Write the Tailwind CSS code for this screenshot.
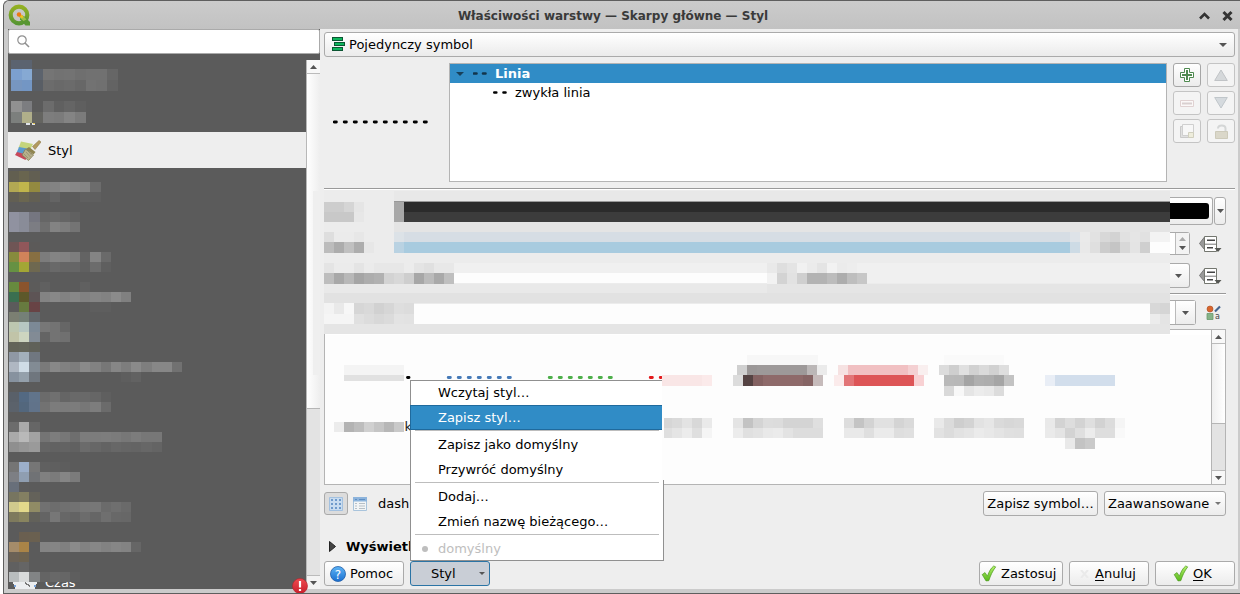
<!DOCTYPE html>
<html lang="pl">
<head>
<meta charset="utf-8">
<title>Właściwości warstwy — Skarpy główne — Styl</title>
<script src="https://cdn.jsdelivr.net/npm/@tailwindcss/browser@4"></script>
</head>
<body class="w-[1240px] h-[594px] overflow-hidden bg-white font-['DejaVu_Sans',sans-serif] text-[13px] leading-4 text-black">
<svg width="0" height="0" class="absolute">
  <defs>
    <linearGradient id="gc" x1="0" y1="0" x2="0" y2="1"><stop offset="0" stop-color="#b5f26b"/><stop offset="1" stop-color="#58b81c"/></linearGradient>
    <linearGradient id="gb" x1="0" y1="0" x2="0" y2="1"><stop offset="0" stop-color="#5db4f5"/><stop offset="1" stop-color="#1a6fd0"/></linearGradient>
    <linearGradient id="gq" x1="0" y1="0" x2="0" y2="1"><stop offset="0" stop-color="#93b023"/><stop offset="1" stop-color="#589632"/></linearGradient>
    <linearGradient id="gr" x1="0" y1="0" x2="0" y2="1"><stop offset="0" stop-color="#ee4a4f"/><stop offset="1" stop-color="#c91f2c"/></linearGradient>
    <symbol id="check" viewBox="0 0 16 17"><path d="M1.2 9.6 4 7.6l2.4 3.6C8 6.600 10 3 12.700 1l2 .9C11.500 6 9.500 10.500 7.800 15.700L5 15.900Z" fill="url(#gc)" stroke="#4e9a20" stroke-width=".7" stroke-linejoin="round"/></symbol>
    <symbol id="override" viewBox="0 0 24 18"><path d="M5.500 2v12.500L.5 8.500Z" fill="#999" stroke="#777"/><path d="M5.500 1.500h12v15h-12z" fill="#fff" stroke="#73766f"/><path d="M6 9.200h11" stroke="#777"/><path d="M8 5.200h8M8 12.800h6" stroke="#444" stroke-width="1.600"/><path d="M15.500 13h7L19 17z" fill="#555753"/></symbol>
  </defs>
</svg>
<div class="relative ml-[3px] flex h-[594px] w-[1237px] flex-col rounded-tl-md border-t border-l border-b border-[#5e5e5e] bg-[#cbcbcb]">
  <header class="flex h-[28px] shrink-0 items-center rounded-tl-md bg-linear-to-b from-[#cbcbcb] to-[#c2c2c2]">
    <svg class="ml-[4px] h-[22px] w-[22px]" viewBox="0 0 22 22"><circle cx="11" cy="11" r="8.300" fill="none" stroke="url(#gq)" stroke-width="4.200"/><path d="M12 12h4l6 6v3.500h-4.500L12 15.500z" fill="#589632"/><path d="M11 11h3.500l4 4.500-3 1.500-4.500-4z" fill="#9cc04a"/><path d="M11.500 11h2.500l1.500 2-1.500 1.500-2.500-2z" fill="#f0c020"/><circle cx="11" cy="10.500" r="2.200" fill="#ee7913"/></svg>
    <div class="-ml-[26px] flex-1 pt-[2px] pr-[18px] text-center text-[12px] font-bold text-[#3a3a3a]">Właściwości warstwy — Skarpy główne — Styl</div>
    <svg class="-ml-[42px] mr-[6px] mt-[1px] h-[12px] w-[36px]" viewBox="0 0 36 12"><path d="M2 8.500 6.500 4 11 8.500" fill="none" stroke="#333" stroke-width="2.600"/><path d="M25.500 2l8 8M33.500 2l-8 8" stroke="#333" stroke-width="3"/></svg>
  </header>
  <div class="flex h-[560px] shrink-0 pl-[4px]">
    <!-- Sidebar -->
    <aside class="flex w-[312px] shrink-0 flex-col bg-[#5b5b5b]">
      <div class="flex h-[25px] shrink-0 items-center rounded-xs border border-[#aaa] bg-white pl-[8px]">
        <svg class="h-[13px] w-[13px]" viewBox="0 0 13 13"><circle cx="5" cy="5" r="4.200" fill="none" stroke="#909090" stroke-width="1.200"/><path d="M8 8l4 4" stroke="#909090" stroke-width="1.600"/></svg>
      </div>
      <div class="flex flex-1 pt-[6px]">
        <div class="flex w-[298px] flex-col">
          <svg class="h-[72px] w-[298px] shrink-0" viewBox="8 60 298 72" shape-rendering="crispEdges" data-step="10.67" data-strips="11 58 11 5b6370*2|11 69 11 7ca0d0 86a9d3 5c636d 757575 727272 737373 6f6f6f 717171 717171 666|11 80 11 7796c0 7396c4 595e65 6c6c6c 696969 6b6b6b 676767 727272 707070 636363|11 101 11 919191 7c7d80 5b5b5b 6c6c6c 606060 656565 5f5f5f|11 112 11 7c7f7d b0af8a 646460 7d7d7d 7b7b7b 848484 7b7b7b"><path d="M26 123.500h4M32 123.500h3" stroke="#dfe3ea" stroke-width="2"/><path d="M33 123h2" stroke="#e6c64f" stroke-width="1"/></svg>
          <div class="flex h-[36px] shrink-0 items-center bg-[#eeeeee] pl-[7px]">
            <svg class="h-[21px] w-[26px]" viewBox="0 0 26 21"><path d="M6 1.500 18 4l-3 6L3.500 8z" fill="#c5d57c"/><path d="M4 7l11 2-1.500 6L1.500 13z" fill="#5a9bd0"/><path d="M2 12l11 3-2.500 5L0 15z" fill="#c8485a"/><path d="M17.500 6.500 24 .5l2 1.500-6 7.500z" fill="#b39a5e" stroke="#8f7a48" stroke-width=".6"/><path d="M14 7l6.500 5-2 2.500L11 9z" fill="#8f8550"/><path d="M10.500 9l8 6-5 5.500L7 15z" fill="#b7b18c" stroke="#857c52" stroke-width=".8"/><path d="M11 12l4.500 5M9 14l4 4M13.500 11l3 4" stroke="#8b8563" stroke-width=".6"/></svg>
            <span class="ml-[7px] pt-[1px]">Styl</span>
          </div>
          <svg class="h-[421px] w-[298px] shrink-0" viewBox="8 168 298 421" shape-rendering="crispEdges" data-step="10.18" data-strips="9 171 11 625f50 69654f 625f52|9 182 10 b2a853 c0b54c 938a40 818181 838383 8a8a8a 868686 838383 6c6c6c|9 192 10 625f53 6a6650 625f53 5d5d5d 646464 5b5b5b*2 606060 5f5f5f|9 212 10 9092a0 898c98 757680 666 696969 656565 616161|9 222 10 9092a0 898c98 7c7d83 6e6e6e 838383 7d7d7d 747474|9 242 10 6f5555 91575a 5c5a59|9 252 10 878b3d d0835a 876f42 7c7c7c 848484 828282 7d7d7d 636363 848484 6a6a6a|9 262 10 669143 a3a635 6e6850 636363 696969 666 666 606060 6c6c6c 5f5f5f|9 282 10 678a3e 8b542d 5c5b5a 606060 5b5b5b*3 606060|9 292 10 3a6f50 5d582a 5d5455 838383 888 828282 878787 818181 858585 828282 8b8b8b 808080|9 302 10 5b5b5b 677a3f 684345 5b5b5b*5 5e5e5e*2|9 312 10 7b7f72 758077 62676b|9 322 10 bdc7b0 b7c7c2 7c8996 777 737373 666|9 332 10 c1c4a8 cdd5c0 828b95 646464 737373 707070|9 342 10 636459 64665b 606159|9 352 10 8f98a4 a3b0bb 707780|9 362 10 afb7c2 cfdce6 828b94 7a7a7a 888 818181 7d7d7d 8a8a8a 828282 777777 868686 7d7d7d 8a8a8a 7e7e7e 878787 878787 717171|9 372 10 87929f 94a0ab 6f767e 5b5b5b*8 5e5e5e 626262|9 392 10 596069 536982 61748b 6b6b6b 707070 656565 696969 696969 666666 5f5f5f|9 402 10 5b626b 53677d 61738a 727272 7c7c7c 7b7b7b 7c7c7c 777777 7d7d7d 6b6b6b|9 422 10 6c6c6c aaaaaa 666|9 432 10 aaa b9b9b9 a2a2a2 747474 7d7d7d 777777 6e6e6e 7c7c7c*2 7d7d7d 7b7b7b 777777 7c7c7c 777 777777|9 442 10 8f8f8f 959595 9a9a9a 646464 626262 636363 616161 6b6b6b 676767 636363 676767 656565 646464 676767 646464|9 462 10 757575 9cafca 767676 606060 5f5f5f 5d5d5d|9 472 10 7d7f84 8f9eb1 707275 808080 7b7b7b 858585 7b7b7b|9 482 10 686f7a 5c5c5c|9 492 10 777560 837f62 64625a|9 502 10 d1ca8d e3d98b 908b65 717171 6d6d6d 707070 727272 767676 777777 6b6b6b 6f6f6f 6a6a6a|9 512 10 7e7a5d 88845f 62615a 646464 777777 676767 646464 6c6c6c 666666 6f6f6f 686868 676767|9 532 10 5b5b5b 6a5f50 6a6050|9 542 10 a58c6a aa8447 5b5b5b 848484 858585 808080 8b8b8b 828282 878787 828282 868686 838383 666|9 552 10 6b6256 6c6250|9 562 10 606060 656565|9 572 10 b9bdbe d8dada 828485 646464 686868 666666 5e5e5e"><path d="M13 582h24l-2 7H15z" fill="#eceef0"/><path d="M25 583l5 3" stroke="#777" stroke-width="1.500"/><path d="M14 586h2M34 586h2" stroke="#7aa5dc" stroke-width="2"/><text x="45" y="587" font-size="13" fill="#fff">Czas</text></svg>
        </div>
        <div class="relative flex h-[529px] w-[14px] flex-col border-l border-[#b8b8b8] bg-[#e3e3e3]">
          <div class="flex h-[14px] items-center justify-center border-b border-[#bbb] bg-[#f8f8f8]"><svg class="h-[4px] w-[7px]" viewBox="0 0 7 4"><path d="M0 4 3.500 0 7 4z" fill="#555"/></svg></div>
          <div class="h-[335px] border-b border-[#b5b5b5] bg-linear-to-r from-white to-[#eeeeee]"></div>
          <div class="flex-1"></div>
          <div class="flex h-[14px] items-center justify-center border-t border-[#bbb] bg-[#f3f3f3]"><svg class="h-[4px] w-[7px]" viewBox="0 0 7 4"><path d="M0 0h7L3.500 4z" fill="#555"/></svg></div>
          <div class="absolute top-[131px] left-[6px] h-[184px] w-[7px] bg-[#efefef]"></div>
          <svg class="absolute -left-[16px] top-[518px] h-[15px] w-[17px]" viewBox="0 0 17 15"><circle cx="9" cy="8" r="7.500" fill="url(#gr)" stroke="#b3202a" stroke-width=".6"/><path d="M9 3v6.500" stroke="#fff" stroke-width="2.200"/><path d="M9 11v2" stroke="#fff" stroke-width="2.200"/></svg>
        </div>
      </div>
    </aside>
    <!-- Main panel -->
    <main class="flex h-[560px] w-[918px] flex-col bg-[#eeeeee] pl-[4px]">
      <div class="mt-[3px] flex h-[25px] w-[911px] shrink-0 items-center rounded-[3px] border border-[#aaa] bg-linear-to-b from-white to-[#ebebeb] pl-[7px] pr-[7px]">
        <svg class="h-[15px] w-[13px]" viewBox="0 0 13 15" shape-rendering="crispEdges"><path d="M.5.500h10v3H.5zM2.500 5.500h10v3h-10zM.5 10.500h10v3H.5z" fill="#0db55b" stroke="#0b5532"/></svg>
        <span class="ml-[4px] flex-1">Pojedynczy symbol</span>
        <svg class="h-[4px] w-[8px]" viewBox="0 0 8 4"><path d="M0 0h8L4 4z" fill="#555"/></svg>
      </div>
      <div class="mt-[6px] flex h-[119px] shrink-0">
        <div class="flex w-[125px] items-center pb-[1px] pl-[9px]"><svg class="h-[4px] w-[96px]" viewBox="0 0 96 4"><path d="M1.200 2H96" stroke="#000" stroke-width="2.800" stroke-dasharray="2.200 7.800" stroke-linecap="round"/></svg></div>
        <div class="w-[718px] border border-[#b4b4b4] bg-white">
          <div class="flex h-[19px] items-center bg-[#308cc6] pl-[6px] font-bold text-white">
            <svg class="h-[4px] w-[8px]" viewBox="0 0 8 4"><path d="M0 0h8L4 4z" fill="#18405a"/></svg>
            <svg class="ml-[9px] h-[3px] w-[14px]" viewBox="0 0 14 3"><path d="M1 1.500h2.500M10 1.500h2.500" stroke="#12354c" stroke-width="2.600" stroke-linecap="round"/></svg>
            <span class="ml-[8px]">Linia</span>
          </div>
          <div class="flex h-[19px] items-center pl-[43px]">
            <svg class="h-[3px] w-[14px]" viewBox="0 0 14 3"><path d="M1.300 1.500h2M10.500 1.500h2" stroke="#000" stroke-width="2.600" stroke-linecap="round"/></svg>
            <span class="ml-[8px]">zwykła linia</span>
          </div>
        </div>
        <div class="ml-[6px] grid h-[80px] grid-cols-[28px_28px] grid-rows-[24px_24px_24px] gap-x-[6px] gap-y-[4px]">
          <div class="flex items-center justify-center rounded-[3px] border border-[#a6a6a6] bg-linear-to-b from-white to-[#ececec]"><svg class="h-[14px] w-[14px]" viewBox="0 0 14 14"><path d="M4.500.5h5v4h4v5h-4v4h-5v-4h-4v-5h4z" fill="#fff" stroke="#4f8a50"/><path d="M7 2v10M2 7h10" stroke="#4f8a50" stroke-width="2"/></svg></div>
          <div class="flex items-center justify-center rounded-[3px] border border-[#c4c4c4] bg-[#f4f4f4]"><svg class="h-[12px] w-[14px]" viewBox="0 0 14 12"><path d="M7 1l6.300 10.500H.7z" fill="#d5d8da" stroke="#c0c3c6"/></svg></div>
          <div class="flex items-center justify-center rounded-[3px] border border-[#c4c4c4] bg-[#f4f4f4]"><svg class="h-[7px] w-[14px]" viewBox="0 0 14 7"><path d="M.5.500h13v6H.5z" fill="#fbf8f8" stroke="#e0d2d2"/><path d="M2 3.500h10" stroke="#d9d0d0" stroke-width="2"/></svg></div>
          <div class="flex items-center justify-center rounded-[3px] border border-[#c4c4c4] bg-[#f4f4f4]"><svg class="h-[12px] w-[14px]" viewBox="0 0 14 12"><path d="M.7.500h12.600L7 11z" fill="#d5dade" stroke="#c0c6ca"/></svg></div>
          <div class="flex items-center justify-center rounded-[3px] border border-[#c4c4c4] bg-[#f4f4f4]"><svg class="h-[15px] w-[15px]" viewBox="0 0 15 15"><path d="M.5 2.500h10v11H.5z" fill="#e0e0e0" stroke="#c9c9c9"/><path d="M2.500.5h11v11h-11z" fill="#f7f7f7" stroke="#cfcfcf"/><path d="M8.500 8.500h5v5h-5z" fill="#eeeddc" stroke="#d0cfbe"/></svg></div>
          <div class="flex items-center justify-center rounded-[3px] border border-[#c4c4c4] bg-[#f4f4f4]"><svg class="h-[15px] w-[13px]" viewBox="0 0 13 15"><path d="M3 4.500C3 .5 10.500.5 10.500 4.500V8" fill="none" stroke="#d4d6d6" stroke-width="2"/><path d="M.5 7.500h12v7H.5z" fill="#dad7c9" stroke="#cdcaba"/></svg></div>
        </div>
      </div>
      <div class="mt-[6px] h-[2px] w-[911px] shrink-0 border-t border-b border-t-[#999] border-b-white"></div>
      <!-- Symbol properties -->
      <div class="flex h-[139px] shrink-0">
        <svg class="h-[145px] w-[846px] shrink-0" viewBox="324 190 846 145" shape-rendering="crispEdges" data-step="10" data-strips="324 202 10 cdcdcd*2 d5d5d5 e5e5e5|324 212 10 c8c8c8*3 e7e7e7|324 232 10 dedede ebebeb*2 e7e7e7|324 242 11 bcbcbc acacac c0c0c0 adadad e7e7e7|324 263 10 e4e4e4 ebebeb*2 e4e4e4 ebebeb e7e7e7*3 ececec e4e4e4 e0e0e0 e8e8e8*2|324 273 11 bdbdbd a8a8a8 b8b8b8 a5a5a5 adadad b1b1b1 d3d3d3 d8d8d8 cecece a7a7a7 bbbbbb a9a9a9 bfbfbf|324 303 11 f3f3f3 e9e9e9 f7f7f7 d6d6d6 d9d9d9 d1d1d1 d6d6d6 dedede dcdcdc|324 314 10 f5f5f5*3 e0e0e0 dcdcdc d8d8d8 dbdbdb e3e3e3 e2e2e2|767 263 10 e9e9e9 dedede e4e4e4 f1f1f1 ebebeb e4e4e4 f2f2f2 ebebeb ededed|767 273 11 f2f2f2 d3d3d3 e2e2e2 cfcfcf b3b3b3*2 bcbcbc adadad bebebe c7c7c7|1070 232 10 dee3e8 eaeaea e2e2e2 d8d8d8 d3d3d3 e1e1e1 e5e5e5 e1e1e1 f3f3f3*2|1070 242 11 cddbe5 e9e9e9 dfdfdf cccccc c5c5c5 d8d8d8 e4e4e4 cfcfcf fdfdfd*2|1150 303 11 d8d8d8 d5d5d5|1150 314 10 ececec e4e4e4">
          <path fill="#ececec" d="M324 190h846v145H324z"/><path fill="#e8e8e8" d="M394 191h776v10H394z"/><path fill="#999" d="M394 201h776v1H394z"/><path fill="#a8a8a8" d="M394 202h10v20h-10z"/><path fill="#2b2b2b" d="M404 202h766v10H404z"/><path fill="#3c3c3c" d="M404 212h766v10H404z"/><path fill="#e4e4e4" d="M394 222h776v10H394z"/><path fill="#d6dde4" d="M394 232h676v10H394z"/><path fill="#a8cbdf" d="M394 242h676v11H394z"/><path fill="#dce2e7" d="M394 232h10v10h-10z"/><path fill="#b9d2e2" d="M394 242h10v11h-10z"/><path fill="#f0f0f0" d="M454 263h716v20H454z"/><path fill="#fdfdfd" d="M454 273h313v10H454z"/><path fill="#e9e9e9" d="M324 284h443v9H324z"/><path fill="#e5e5e5" d="M767 284h403v9H767z"/><path fill="#e2e2e2" d="M324 293h846v10H324z"/><path fill="#fdfdfd" d="M414 304h736v20H414z"/><path fill="#e5e5e5" d="M324 324h846v10H324z"/>
        </svg>
        <div class="flex w-[65px] flex-col">
          <div class="mt-[7px] flex h-[28px] shrink-0">
            <div class="flex w-[43px] items-center rounded-r-[3px] border border-l-0 border-[#aaa] bg-linear-to-b from-white to-[#ececec]"><div class="h-[16px] w-[39px] rounded-r-[3px] bg-black"></div></div>
            <div class="ml-[1px] flex w-[12px] items-center justify-center rounded-[3px] border border-[#aaa] bg-linear-to-b from-white to-[#ececec]"><svg class="h-[4px] w-[7px] shrink-0" viewBox="0 0 7 4"><path d="M0 0h7L3.500 4z" fill="#555"/></svg></div>
          </div>
          <div class="mt-[7px] flex h-[23px] shrink-0 items-center">
            <div class="flex h-[23px] w-[20px] rounded-r-[3px] border border-l-0 border-[#aaa] bg-white pl-[5px]"><div class="flex flex-1 flex-col items-center justify-center gap-[5px] border-l border-[#bbb] bg-[#f3f3f3]"><svg class="h-[4px] w-[7px]" viewBox="0 0 7 4"><path d="M0 4 3.500 0 7 4z" fill="#aaa"/></svg><svg class="h-[4px] w-[7px]" viewBox="0 0 7 4"><path d="M0 0h7L3.500 4z" fill="#555"/></svg></div></div>
            <svg class="ml-[9px] h-[18px] w-[24px]"><use href="#override"/></svg>
          </div>
          <div class="mt-[8px] flex h-[25px] shrink-0 items-center">
            <div class="flex h-[25px] w-[20px] items-center rounded-r-[3px] border border-l-0 border-[#aaa] bg-linear-to-b from-white to-[#ececec] pl-[5px]"><svg class="h-[4px] w-[7px]" viewBox="0 0 7 4"><path d="M0 0h7L3.500 4z" fill="#555"/></svg></div>
            <svg class="ml-[9px] h-[18px] w-[24px]"><use href="#override"/></svg>
          </div>
          <div class="mt-[5px] h-[2px] w-[56px] shrink-0 border-t border-b border-t-[#999] border-b-white"></div>
          <div class="mt-[5px] flex h-[25px] shrink-0 items-center">
            <div class="flex h-[25px] w-[26px] rounded-r-[3px] border border-l-0 border-[#aaa] bg-white pl-[5px]"><div class="flex flex-1 items-center justify-center border-l border-[#bbb] bg-linear-to-b from-white to-[#ececec]"><svg class="h-[4px] w-[7px]" viewBox="0 0 7 4"><path d="M0 0h7L3.500 4z" fill="#555"/></svg></div></div>
            <svg class="ml-[10px] h-[16px] w-[16px]" viewBox="0 0 16 16"><circle cx="4" cy="4" r="3" fill="#d9662e" stroke="#a84c20" stroke-width=".6"/><path d="M9 6.500l5-5" stroke="#45658f" stroke-width="2.200"/><path d="M1 8.500h6v6H1z" fill="#86b388" stroke="#6a996d" stroke-width=".8"/><text x="9" y="14" font-size="8" fill="#444">a</text></svg>
          </div>
        </div>
      </div>
      <!-- Symbol browser -->
      <div class="flex h-[156px] w-[902px] shrink-0 border border-[#b4b4b4] bg-white">
        <svg class="-mt-[1px] -ml-[1px] h-[155px] w-[887px]" viewBox="324 329 887 155" shape-rendering="crispEdges" data-step="10" data-strips="344 365 10 f4f4f4*6|344 375 6 e1e1e1*6|662 375 11 f9e6e6*4 fbeaea|737 365 10 d0d0d0 9b9797 9d9999*5 bbb7b7 ebebeb|733 375 11 dcdcdc 554343 846262 8e6a6a*4 866565 c6bbbb|838 365 10 f6e2e2 f1c0c2*6 f4d0d2 f9efef|834 375 11 fbebeb e27577 dd5557*6 f8d1d3|939 365 10 dcdcdc cecece e0e0e0 d1d1d1 dadada d1d1d1 dedede|944 375 11 b9b9b9 b8b8b8 a4a4a4 afafaf adadad a5a5a5 c3c3c3|944 386 10 d9d9d9 f8f8f8 e5e5e5 ececec e9e9e9 dcdcdc|1045 375 11 e9eef6 d2deec*6|334 422 10 ececec b3b3b3 bdbdbd d0d0d0 c5c5c5 b7b7b7 c9c9c9|662 418 10 d6d6d6 dadada e3e3e3 d8d8d8 eaeaea|662 428 10 dfdfdf e5e5e5 ececec dfdfdf f5f5f5|733 418 10 e4e4e4 c3c3c3 d4d4d4 dddddd dcdcdc d4d4d4*3 dfdfdf|733 428 10 ececec e0e0e0 e3e3e3 e9e9e9 ebebeb e3e3e3 dddddd*3|844 418 10 dddddd c4c4c4 d3d3d3 e1e1e1*2 d4d4d4 dadada|844 428 10 e9e9e9*2 dfdfdf ebebeb*2 dedede e0e0e0|934 418 10 e9e9e9 dbdbdb cecece d3d3d3 e2e2e2 e6e6e6 dadada d7d7d7 d9d9d9|934 428 10 e2e2e2 dcdcdc e2e2e2 e5e5e5 ebebeb e8e8e8 e4e4e4 e0e0e0 dfdfdf|1045 418 10 e9e9e9 d3d3d3 dddddd d3d3d3 dfdfdf d2d2d2 dcdcdc f5f5f5|1045 428 10 eaeaea e4e4e4 d3d3d3 dfdfdf ececec dedede dedede f9f9f9|1065 438 11 e9e9e9 c3c3c3 cacaca">
          <path fill="#fdfdfd" d="M325 335h886v149H325z"/><path fill="#e5e5e5" d="M324 329h846v5H324z"/><path fill="#f7f7f7" d="M747 355h71v10h-71z"/><path fill="#fafafa" d="M944 355h60v10h-60z"/>
          <g shape-rendering="auto" stroke-width="2.800" stroke-linecap="round"><path d="M407.500 377.500h1.500" stroke="#000"/><path d="M448.200 377.500h64" stroke="#467ab8" stroke-dasharray="2.200 7.800"/><path d="M549.200 377.500h64" stroke="#4daf4a" stroke-dasharray="2.200 7.800"/><path d="M650.200 377.500h11" stroke="#e31a1c" stroke-dasharray="2.200 7.800"/></g>
          <text x="404.500" y="431" font-size="13" fill="#222">k</text>
        </svg>
        <div class="flex w-[14px] flex-col border-l border-[#b4b4b4] bg-[#e3e3e3]">
          <div class="flex h-[14px] items-center justify-center border-b border-[#bbb] bg-[#f8f8f8]"><svg class="h-[4px] w-[7px]" viewBox="0 0 7 4"><path d="M0 4 3.500 0 7 4z" fill="#555"/></svg></div>
          <div class="h-[80px] border-b border-[#b5b5b5] bg-linear-to-r from-[#efefef] to-white"></div>
          <div class="flex-1"></div>
          <div class="flex h-[14px] items-center justify-center border-t border-[#bbb] bg-[#f8f8f8]"><svg class="h-[4px] w-[7px]" viewBox="0 0 7 4"><path d="M0 0h7L3.500 4z" fill="#555"/></svg></div>
        </div>
      </div>
      <div class="mt-[6px] flex h-[25px] w-[902px] shrink-0 items-center">
        <div class="flex h-[23px] w-[24px] items-center justify-center rounded-[3px] border border-[#aaa] bg-[#dcdcdc]"><svg class="h-[14px] w-[14px]" viewBox="0 0 14 14"><path d="M.5.500h13v13H.5z" fill="#c8dcf0" stroke="#a3c1e0"/><path d="M2 3h10M2 7h10M2 11h10" stroke="#6f9acb" stroke-width="2" stroke-dasharray="2"/></svg></div>
        <svg class="ml-[5px] h-[14px] w-[14px]" viewBox="0 0 14 14"><path d="M.5.500h13v13H.5z" fill="#f3f5f6" stroke="#a9c4dc"/><path d="M0 0h14v4.500H0z" fill="#8db4dc"/><path d="M2 2.500h2M6 2.500h6" stroke="#5f8fc4"/><path d="M2 6.500h2M6 6.500h6M2 9h2M6 9h6M2 11.500h2M6 11.500h6" stroke="#b6bfc6"/></svg>
        <span class="ml-[11px] flex-1">dash</span>
        <div class="flex h-[25px] w-[115px] items-center justify-center rounded-[3px] border border-[#aaa] bg-linear-to-b from-white to-[#ececec]">Zapisz symbol…</div>
        <div class="ml-[6px] flex h-[25px] w-[122px] items-center rounded-[3px] border border-[#aaa] bg-linear-to-b from-white to-[#ececec] pl-[3px]"><span class="flex-1">Zaawansowane</span><svg class="mr-[4px] h-[3px] w-[6px] shrink-0" viewBox="0 0 6 3"><path d="M0 0h6L3 3z" fill="#777"/></svg></div>
      </div>
      <div class="mt-[22px] flex h-[17px] shrink-0 items-center pl-[5px] font-bold"><svg class="h-[11px] w-[7px]" viewBox="0 0 7 11"><path d="M.5.500 6.500 5.500l-6 5z" fill="#444" stroke="#222"/></svg><span class="ml-[10px]">Wyświetl</span></div>
      <div class="mt-[6px] flex h-[25px] w-[911px] shrink-0">
        <div class="flex w-[80px] items-center rounded-[3px] border border-[#aaa] bg-linear-to-b from-white to-[#ececec] pl-[5px]"><svg class="h-[16px] w-[16px]" viewBox="0 0 16 16"><circle cx="8" cy="8" r="7.500" fill="url(#gb)" stroke="#1f5da8" stroke-width=".8"/><text x="8" y="12.500" font-size="12" text-anchor="middle" fill="#fff">?</text></svg><span class="ml-[4px]">Pomoc</span></div>
        <div class="ml-[6px] flex w-[80px] items-center rounded-[3px] border border-[#2b74a5] bg-[#c9ced6] pl-[20px]"><span class="flex-1">Styl</span><svg class="mr-[4px] h-[3px] w-[6px]" viewBox="0 0 6 3"><path d="M0 0h6L3 3z" fill="#555"/></svg></div>
        <div class="flex-1"></div>
        <div class="flex w-[84px] items-center rounded-[3px] border border-[#aaa] bg-linear-to-b from-white to-[#ececec] pl-[1px]"><svg class="h-[17px] w-[16px]"><use href="#check"/></svg><span class="ml-[4px]">Zastosuj</span></div>
        <div class="ml-[6px] flex w-[80px] items-center rounded-[3px] border border-[#aaa] bg-linear-to-b from-white to-[#ececec] pl-[10px]"><svg class="h-[8px] w-[9px]" viewBox="0 0 9 8"><path d="M1 0l7 8M8 0 1 8" stroke="#eaeaea" stroke-width="2"/></svg><span class="ml-[6px]"><span class="underline underline-offset-2">A</span>nuluj</span></div>
        <div class="ml-[6px] flex w-[80px] items-center rounded-[3px] border border-[#aaa] bg-linear-to-b from-white to-[#ececec] pl-[17px]"><svg class="h-[17px] w-[16px]"><use href="#check"/></svg><span class="ml-[4px]"><span class="underline underline-offset-2">O</span>K</span></div>
      </div>
    </main>
  </div>
  <!-- Style menu -->
  <div class="absolute top-[379px] left-[406px] flex h-[181px] w-[254px] flex-col border border-[#909090] bg-white">
    <div class="flex h-[24px] shrink-0 items-center pl-[27px]">Wczytaj styl…</div>
    <div class="-ml-[1px] flex h-[25px] w-[253px] shrink-0 items-center border border-r-0 border-[#1f6a9d] bg-[#308cc6] pl-[27px] text-white">Zapisz styl…</div>
    <div class="ml-[4px] h-px w-[244px] shrink-0 bg-[#bdbdbd]"></div>
    <div class="mt-px flex h-[25px] shrink-0 items-center pl-[27px]">Zapisz jako domyślny</div>
    <div class="flex h-[25px] shrink-0 items-center pl-[27px]">Przywróć domyślny</div>
    <div class="ml-[4px] h-px w-[244px] shrink-0 bg-[#bdbdbd]"></div>
    <div class="mt-px flex h-[25px] shrink-0 items-center pl-[27px]">Dodaj…</div>
    <div class="flex h-[25px] shrink-0 items-center pl-[27px]">Zmień nazwę bieżącego…</div>
    <div class="ml-[4px] h-px w-[244px] shrink-0 bg-[#bdbdbd]"></div>
    <div class="mt-px flex h-[25px] shrink-0 items-center pl-[11px] text-[#bebebe]"><span class="h-[6px] w-[6px] rounded-full bg-[#bebebe]"></span><span class="ml-[10px]">domyślny</span></div>
    <div class="absolute -top-[1px] left-[251px] h-[100px] w-[2px] bg-[#fdfdfd]"></div>
    <div class="absolute -top-[6px] left-[251px] h-[11px] w-[2px] bg-[#f9e6e6]"></div>
  </div>
</div>
<script>
// Draws the obscured content: each strip is "x y height colour[*count] ...".
document.querySelectorAll('svg[data-strips]').forEach(svg => {
  const step = +svg.dataset.step;
  svg.dataset.strips.split('|').forEach(s => {
    const [x, y, h, ...cells] = s.trim().split(' ');
    let i = 0;
    cells.forEach(c => {
      const [hex, n = 1] = c.split('*');
      const a = Math.round(+x + i * step), b = Math.round(+x + (i + +n) * step);
      i += +n;
      const r = document.createElementNS('http://www.w3.org/2000/svg', 'rect');
      for (const [k, v] of Object.entries({ x: a, y, width: b - a, height: h, fill: '#' + hex })) r.setAttribute(k, v);
      svg.append(r);
    });
  });
});
</script>
</body>
</html>
